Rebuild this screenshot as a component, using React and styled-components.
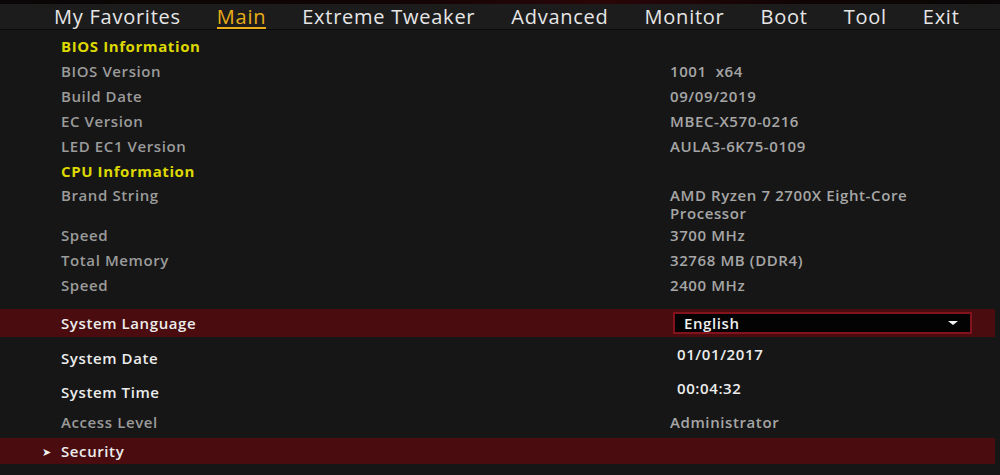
import React from "react";
import styled, { createGlobalStyle } from "styled-components";

const GlobalStyle = createGlobalStyle`
  html, body {
    margin: 0;
    padding: 0;
    background: #161616;
  }
  body {
    font-family: "Open Sans", "Noto Sans", sans-serif;
  }
`;

const tabs = ["My Favorites", "Main", "Extreme Tweaker", "Advanced", "Monitor", "Boot", "Tool", "Exit"];

const bios = [
  { label: "BIOS Version", value: "1001  x64" },
  { label: "Build Date", value: "09/09/2019" },
  { label: "EC Version", value: "MBEC-X570-0216" },
  { label: "LED EC1 Version", value: "AULA3-6K75-0109" }
];

const cpu = [
  { label: "Speed", value: "3700 MHz" },
  { label: "Total Memory", value: "32768 MB (DDR4)" },
  { label: "Speed", value: "2400 MHz" }
];

const Screen = styled.div`
  width: 1000px;
  height: 475px;
  overflow: hidden;
  background: #161616;
  display: flex;
  flex-direction: column;
`;

const TopStrip = styled.div`
  height: 4px;
  background: linear-gradient(90deg, #080606 0%, #120405 40%, #2a0608 60%, #100405 80%, #080606 100%);
`;

const Nav = styled.nav`
  height: 25px;
  background: #1c1c1c;
  border-bottom: 1px solid #0b0b0b;
  display: flex;
  align-items: center;
  padding-left: 54px;
  gap: 36px;
`;

const Tab = styled.div`
  position: relative;
  font-size: 20px;
  font-weight: 500;
  line-height: 25px;
  letter-spacing: 0.75px;
  color: ${(p) => (p.$active ? "#e9ae17" : "#e6e6e6")};

  &::after {
    content: "";
    display: ${(p) => (p.$active ? "block" : "none")};
    position: absolute;
    left: 0;
    right: 0;
    bottom: 0;
    height: 2px;
    background: #e9ae17;
  }
`;

const Body = styled.div`
  display: flex;
  flex-direction: column;
  padding-top: 3px;
`;

const Row = styled.div`
  display: flex;
  align-items: ${(p) => (p.$top ? "flex-start" : "center")};
  height: ${(p) => p.$h || 25}px;
  padding-top: ${(p) => p.$pt || 0}px;
  box-sizing: border-box;
  width: ${(p) => (p.$band ? "995px" : "auto")};
  background: ${(p) => (p.$band ? "#4a0c0e" : "transparent")};
  margin-top: ${(p) => p.$mt || 0}px;
  font-size: 15px;
  letter-spacing: 0.6px;
  white-space: pre;
`;

const Arrow = styled.span`
  width: 61px;
  flex: 0 0 61px;
  box-sizing: border-box;
  padding-left: 42px;
  color: #f0f0f0;
  font-size: 11px;
`;

const Label = styled.div`
  width: 609px;
  flex: 0 0 609px;
  line-height: 18px;
  font-weight: ${(p) => (p.$heading ? 700 : 600)};
  color: ${(p) => (p.$heading ? "#dcd800" : p.$bright ? "#ececec" : "#9b9b9b")};
`;

const Value = styled.div`
  line-height: 18px;
  font-weight: 600;
  color: ${(p) => (p.$bright ? "#ececec" : "#a6a6a6")};
  padding-bottom: ${(p) => (p.$raised ? 8 : 0)}px;
  padding-left: ${(p) => (p.$bright ? 7 : 0)}px;
`;

const Select = styled.div`
  margin-left: 3px;
  width: 299px;
  height: 22px;
  box-sizing: border-box;
  border: 2px solid #82121c;
  background: #030303;
  display: flex;
  align-items: center;
  justify-content: space-between;
  padding: 0 12px 0 9px;
  color: #f0f0f0;
  font-weight: 600;
`;

const Caret = styled.span`
  width: 0;
  height: 0;
  border-left: 5px solid transparent;
  border-right: 5px solid transparent;
  border-top: 4px solid #f4f4f4;
`;

const Heading = ({ children }) => (
  <Row>
    <Arrow />
    <Label $heading>{children}</Label>
  </Row>
);

const InfoRow = ({ label, value }) => (
  <Row>
    <Arrow />
    <Label>{label}</Label>
    <Value>{value}</Value>
  </Row>
);

export default function App() {
  return (
    <Screen>
      <GlobalStyle />
      <TopStrip />
      <Nav>
        {tabs.map((t) => (
          <Tab key={t} $active={t === "Main"}>
            {t}
          </Tab>
        ))}
      </Nav>
      <Body>
        <Heading>BIOS Information</Heading>
        {bios.map((r) => (
          <InfoRow key={r.label} {...r} />
        ))}
        <Heading>CPU Information</Heading>
        <Row $top $h={39} $pt={3}>
          <Arrow />
          <Label>Brand String</Label>
          <Value>
            AMD Ryzen 7 2700X Eight-Core
            <br />
            Processor
          </Value>
        </Row>
        {cpu.map((r, i) => (
          <InfoRow key={i} {...r} />
        ))}
        <Row $band $h={28} $mt={12}>
          <Arrow />
          <Label $bright>System Language</Label>
          <Select>
            English
            <Caret />
          </Select>
        </Row>
        <Row $h={34} $mt={4}>
          <Arrow />
          <Label $bright>System Date</Label>
          <Value $bright $raised>01/01/2017</Value>
        </Row>
        <Row $h={34}>
          <Arrow />
          <Label $bright>System Time</Label>
          <Value $bright $raised>00:04:32</Value>
        </Row>
        <Row>
          <Arrow />
          <Label>Access Level</Label>
          <Value>Administrator</Value>
        </Row>
        <Row $band $h={26} $mt={4}>
          <Arrow>➤</Arrow>
          <Label $bright>Security</Label>
        </Row>
      </Body>
    </Screen>
  );
}
